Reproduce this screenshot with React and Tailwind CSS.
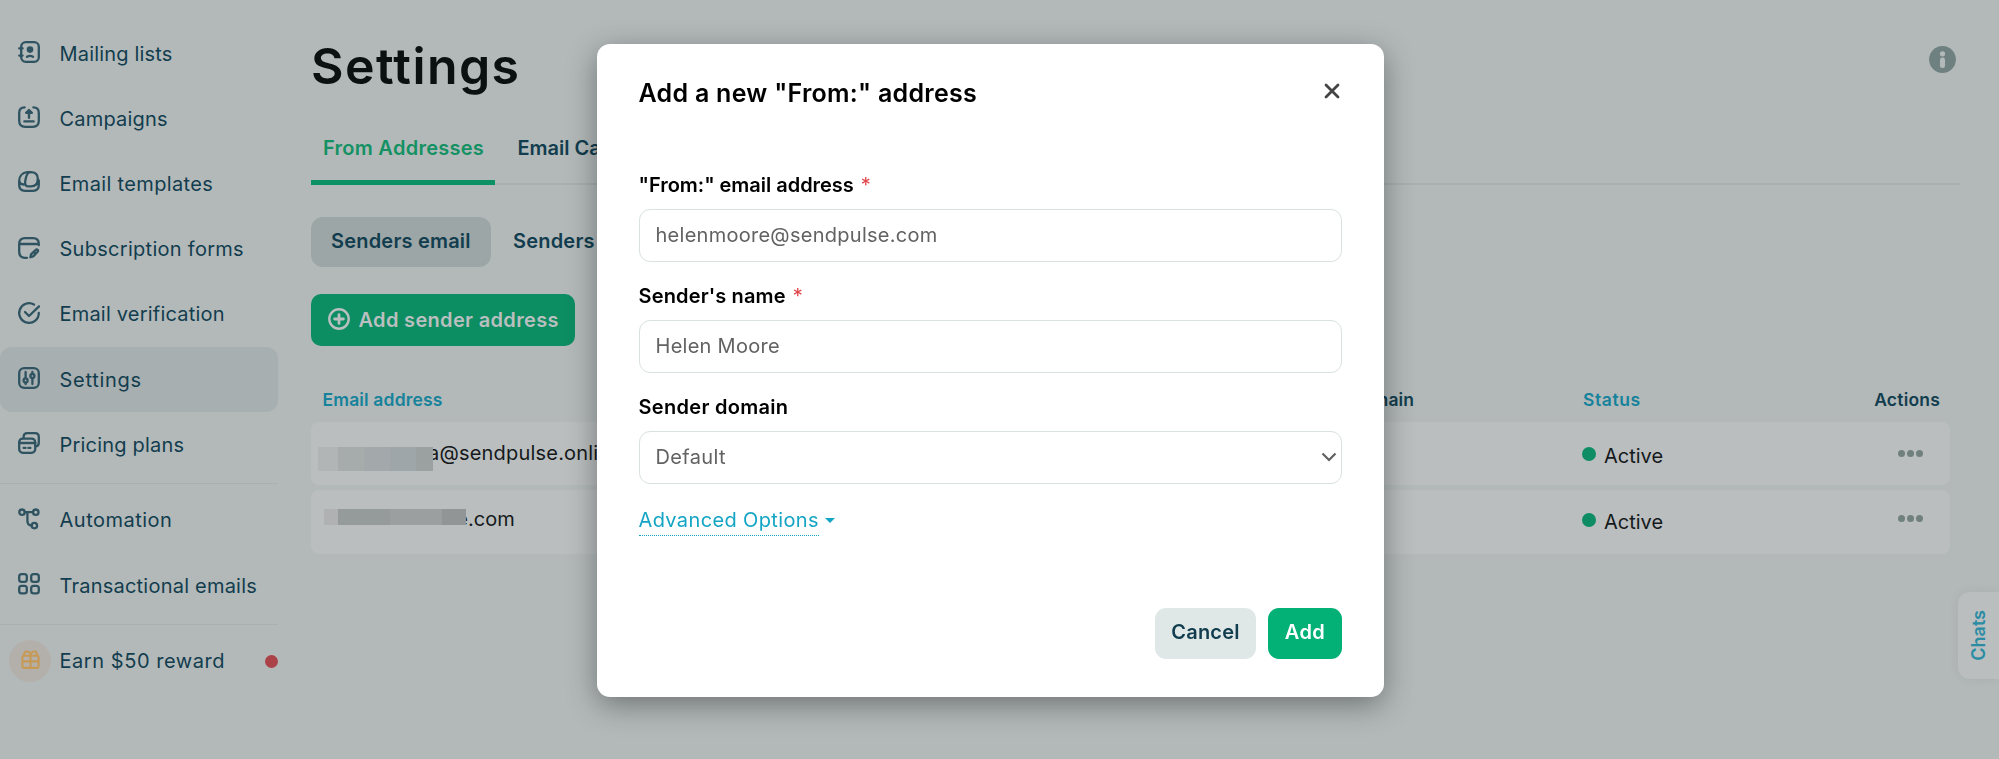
import { useState } from 'react'

const mainLinks = [
  { label: 'Mailing lists', icon: 'lists', track: 'tracking-[0.18px]' },
  { label: 'Campaigns', icon: 'campaigns', track: 'tracking-[0.2px]' },
  { label: 'Email templates', icon: 'templates', track: 'tracking-[0.34px]' },
  { label: 'Subscription forms', icon: 'forms', track: 'tracking-[0.28px]' },
  { label: 'Email verification', icon: 'verify', track: 'tracking-[0.2px]' },
  { label: 'Settings', icon: 'settings', track: 'tracking-[0.7px]', active: true },
  { label: 'Pricing plans', icon: 'pricing', track: 'tracking-[0.2px]' },
]

const extraLinks = [
  { label: 'Automation', icon: 'automation', track: 'tracking-[0.5px]' },
  { label: 'Transactional emails', icon: 'grid', track: 'tracking-[0.22px]' },
]

const icons = {
  lists: (
    <>
      <rect x="3.2" y="1.2" width="17.6" height="19.6" rx="4.6" />
      <path d="M1.2 7.4h3.4M1.2 14.6h3.4" />
      <circle cx="12" cy="8.6" r="3.3" fill="currentColor" stroke="none" />
      <path d="M9 15.8c1.6-1 4.400-1 6 0" />
    </>
  ),
  campaigns: (
    <>
      <path d="M6.6 1.4C3 1.400 1.200 3.200 1.200 7v7.8c0 4 2 6 6 6h7.600c4 0 6-2 6-6V7c0-3.800-1.800-5.600-5.400-5.600" />
      <path d="M11 11.800V5M8.200 6.800 11 4l2.800 2.800zM6.400 15.400h9.200" strokeWidth="2.400" />
    </>
  ),
  templates: (
    <>
      <path d="M12.400 1.200c5.200 0 7.400 2.600 7.400 6.600 0 4.600-2.400 7.600-6.800 7.600h-2.400c-2.800 0-3.800-2-3.400-5C7.800 6 8.600 3 11 1.400" />
      <path d="M12.400 1.200H9.200C4.400 1.800 1.200 5.200 1.200 9.800V14c0 3.800 2 5.800 5.800 5.800h8c3.800 0 5.800-2 5.800-5.800V9.400M1.400 10.400c.4 2.400 2.400 3.400 5.400 3M20.600 10.800c-.4 1.600-1.400 2.600-3 3" />
    </>
  ),
  forms: (
    <>
      <path d="M9 20.800H7c-4 0-5.800-2-5.800-6V7c0-4 2-5.800 5.800-5.800h8c4 0 5.800 1.800 5.800 5.800v1.200M1.200 7h19.600" />
      <path d="m13 17.400 4.600-4.400c1.400-1.200 3.200.4 2 1.800l-4.400 4.600-2.800.8zM16.400 15.400l1 1" />
    </>
  ),
  verify: (
    <>
      <path d="M16 2.600A9.800 9.800 0 1 0 20.800 11" />
      <path d="m7 10 4 4L21 4.400" />
    </>
  ),
  settings: (
    <>
      <rect x="1.2" y="1.2" width="19.6" height="19.6" rx="5" />
      <path d="M7.6 5v6M7.600 16v1M14.400 11.800V17M14.400 5v1" />
      <circle cx="7.6" cy="13.4" r="2" />
      <circle cx="14.4" cy="9" r="2" />
    </>
  ),
  pricing: (
    <>
      <path d="M5.600 5.600V5c0-2.600 1.200-3.800 3.800-3.800H17c2.600 0 3.800 1.200 3.800 3.800v5.600c0 2.600-1.200 3.800-3.200 3.800" />
      <rect x="1.2" y="6.6" width="16" height="14.2" rx="3.6" />
      <path d="M1.200 11h16M5.600 15.900h2M10.400 15.900h2" />
    </>
  ),
  automation: (
    <>
      <circle cx="4" cy="4.2" r="2.7" />
      <circle cx="17.8" cy="4.2" r="2.7" />
      <circle cx="16.4" cy="17.6" r="2.7" />
      <path d="M6.800 4.200H15M9.400 4.200v8.600c0 3 1.200 4.600 4.200 4.800" />
    </>
  ),
  grid: (
    <>
      <rect x="1.2" y="1.2" width="7.6" height="7.6" rx="2.4" />
      <rect x="13.2" y="1.2" width="7.6" height="7.6" rx="2.4" />
      <rect x="1.2" y="12.8" width="7.6" height="7.6" rx="2.4" />
      <rect x="13.2" y="12.8" width="7.6" height="7.6" rx="2.4" />
    </>
  ),
}

function NavIcon({ name }) {
  return (
    <svg
      viewBox="0 0 22 22"
      className="-mt-[3px] size-[22px] shrink-0 overflow-visible text-[#2f5361]"
      fill="none"
      stroke="currentColor"
      strokeWidth="2.3"
      strokeLinecap="round"
      strokeLinejoin="round"
    >
      {icons[name]}
    </svg>
  )
}

function NavLink({ link }) {
  return (
    <a
      className={`flex h-[65.2px] items-center gap-[19.5px] rounded-xl pl-[18px] text-[20px] ${
        link.active ? 'bg-[#a8afb0]' : ''
      }`}
    >
      <NavIcon name={link.icon} />
      <span className={link.track}>{link.label}</span>
    </a>
  )
}

function Sidebar() {
  return (
    <nav className="w-[278px] shrink-0 pt-[21px] text-[#123d4e]">
      {mainLinks.map((link) => (
        <NavLink key={link.label} link={link} />
      ))}
      <div className="mt-[5.5px] mb-1 h-px bg-[#a9b0b0]" />
      {extraLinks.map((link) => (
        <NavLink key={link.label} link={link} />
      ))}
      <div className="mt-[6px] mb-[15px] h-px bg-[#a9b0b0]" />
      <a className="flex h-[42px] items-center pl-[9px] text-[20px] tracking-[0.55px]">
        <span className="flex size-[42px] items-center justify-center rounded-full bg-[#b3b0ab]">
          <svg viewBox="0 0 20 20" className="-mt-1 size-[19px] text-[#c69955]" fill="none" stroke="currentColor" strokeWidth="2.2">
            <rect x="1.5" y="6" width="17" height="12.8" rx="1.5" />
            <path d="M10 6v12.5M1.500 12h17M4 6C1.500 1.500 7.500-.5 10 4.500 12.500-.5 18.500 1.500 16 6" />
          </svg>
        </span>
        <span className="ml-[8.5px]">Earn $50 reward</span>
        <span className="ml-auto size-[13px] rounded-full bg-[#ab4247]" />
      </a>
    </nav>
  )
}

function StatusCell() {
  return (
    <span className="flex items-center">
      <span className="mr-2 -mt-1 size-[14px] rounded-full bg-[#0e8d65]" />
      Active
    </span>
  )
}

function Dots() {
  return (
    <span className="ml-auto mr-[27.5px] flex gap-[2.5px]">
      <i className="size-[6.5px] rounded-full bg-[#70807f]" />
      <i className="size-[6.5px] rounded-full bg-[#70807f]" />
      <i className="size-[6.5px] rounded-full bg-[#70807f]" />
    </span>
  )
}

function AddressTable() {
  return (
    <section className="mt-[41px] w-[1639px]">
      <div className="grid h-[35px] grid-cols-[962px_298.5px_1fr] pl-[11.5px] text-[17.5px] leading-[25px] font-semibold tracking-[0.15px] text-[#123d4e]">
        <span className="text-[#16829b]">Email address</span>
        <span>Sender domain</span>
        <span className="flex justify-between pr-[10px]">
          <span className="tracking-[0.6px] text-[#16829b]">Status</span>
          <span className="tracking-[0.2px]">Actions</span>
        </span>
      </div>
      <div className="grid h-[62.5px] grid-cols-[1263px_1fr] items-center rounded-lg bg-[#babebf] pl-[7px] text-[20px] text-[#15191b]">
        <span className="flex items-center">
          <span className="relative z-10 mt-[11px] flex h-6">
            <i className="w-5 bg-[#b1b5b6]" />
            <i className="w-[26px] bg-[#a6abac]" />
            <i className="w-[26px] bg-[#a3a9ab]" />
            <i className="w-[26px] bg-[#9fa6aa]" />
            <i className="w-[17px] bg-[#9ba0a1]" />
          </span>
          <span className="-ml-[5px] tracking-[0.2px]">a@sendpulse.online</span>
        </span>
        <span className="flex items-center pl-px">
          <span className="mt-[5px]">
            <StatusCell />
          </span>
          <Dots />
        </span>
      </div>
      <div className="mt-[5.5px] grid h-[63.5px] grid-cols-[1263px_1fr] items-center rounded-lg bg-[#babebf] pl-[7px] text-[20px] text-[#15191b]">
        <span className="-mt-[5px] flex items-center pl-1.5">
          <span className="-mt-[5px] flex h-4">
            <i className="w-[14px] bg-[#afb1b2]" />
            <i className="w-[52px] bg-[#959a9a]" />
            <i className="w-[52px] bg-[#9b9f9f]" />
            <i className="w-[24px] bg-[#919595]" />
          </span>
          <span className="flex w-[2px] justify-end overflow-hidden">e</span>
          <span>.com</span>
        </span>
        <span className="flex items-center pl-px">
          <StatusCell />
          <span className="-mt-[7px] ml-auto">
            <Dots />
          </span>
        </span>
      </div>
    </section>
  )
}

function SettingsPage() {
  return (
    <main className="ml-[33px] w-[1649px] shrink-0">
      <header className="flex items-start justify-between">
        <h1 className="mt-[36px] text-[50px] leading-[60px] font-semibold tracking-[1.4px] text-[#0b1011]">Settings</h1>
        <svg viewBox="0 0 27 27" className="mt-[46px] mr-1 size-[27px]">
          <circle cx="13.5" cy="13.5" r="13.4" fill="#6f8081" />
          <circle cx="13.5" cy="7.8" r="2.6" fill="#b3b9b9" />
          <rect x="11" y="11.6" width="5" height="10.4" rx="2.3" fill="#b3b9b9" />
        </svg>
      </header>
      <div className="mt-[29px] flex h-[60px] border-b-2 border-[#a9b0b0] text-[20px] leading-[46px] font-semibold text-[#123d4e]">
        <span className="h-[60px] w-[184px] border-b-[5px] border-[#0b9163] pl-3 tracking-[0.27px] text-[#149163]">
          From Addresses
        </span>
        <span className="ml-[22.5px]">Email Campaigns</span>
      </div>
      <div className="mt-[31.5px] flex h-[50.5px] text-[20px] leading-[48px] font-semibold tracking-[0.2px] text-[#123d4e]">
        <span className="w-[180px] rounded-xl bg-[#9ca6a7] pl-5">Senders email</span>
        <span className="ml-[22px]">Senders name</span>
      </div>
      <button className="mt-[27px] flex h-[52px] w-[264px] items-center rounded-[10px] bg-[#0d8d62] pl-[16.5px] text-[20px] font-semibold tracking-[0.33px] text-[#babfbf]">
        <svg viewBox="0 0 22 22" className="-mt-[3px] mr-[9px] size-[22px]" fill="none" stroke="currentColor" strokeWidth="2.4" strokeLinecap="round">
          <circle cx="11" cy="11" r="9.7" />
          <path d="M11 6.600v8.800M6.600 11h8.800" strokeWidth="2.8" />
        </svg>
        Add sender address
      </button>
      <AddressTable />
    </main>
  )
}

function Field({ label, track, required, children }) {
  return (
    <div className="h-[111px]">
      <div className="flex h-[33.5px] text-[20px] leading-[19px] font-semibold text-black">
        <span className={track}>{label}</span>
        {required && <span className="ml-[7px] text-[#e0454b] font-normal">*</span>}
      </div>
      {children}
    </div>
  )
}

function AddressModal() {
  const [email, setEmail] = useState('helenmoore@sendpulse.com')
  const [name, setName] = useState('Helen Moore')
  const inputClass =
    'block h-[52.5px] w-full rounded-[11px] border border-[#dae1e1] bg-white pl-4 text-[20px] tracking-[0.27px] text-[#626262] outline-none'

  return (
    <div className="fixed inset-0 flex items-start pt-[43.5px] pl-[596.5px]">
      <div className="h-[653.5px] w-[787.5px] rounded-[13px] bg-white px-[42px] shadow-[0_8px_30px_0_rgba(0,0,0,0.38)]">
        <div className="flex h-[132px] items-start justify-between">
          <h2 className="mt-[33px] text-[25px] leading-[32px] font-semibold tracking-[0.27px] text-black">
            Add a new "From:" address
          </h2>
          <svg viewBox="0 0 16 16" className="mt-[39px] mr-[2.5px] size-4" fill="none" stroke="#444" strokeWidth="2.8" strokeLinecap="round">
            <path d="m2 2 12 12M14 2 2 14" />
          </svg>
        </div>
        <Field label={'"From:" email address'} track="tracking-[-0.03px]" required>
          <input className={inputClass} value={email} onChange={(event) => setEmail(event.target.value)} />
        </Field>
        <Field label="Sender's name" track="tracking-[0.15px]" required>
          <input className={inputClass} value={name} onChange={(event) => setName(event.target.value)} />
        </Field>
        <Field label="Sender domain" track="tracking-[0.3px]">
          <div className="flex h-[52.5px] items-center justify-between rounded-[11px] border border-[#dae1e1] pr-[4.5px] pl-4 text-[20px] tracking-[0.35px] text-[#626262]">
            Default
            <svg viewBox="0 0 16 10" className="h-[10px] w-4" fill="none" stroke="#606060" strokeWidth="2.2">
              <path d="m1.500 1.500 6.500 6.500 6.500-6.500" />
            </svg>
          </div>
        </Field>
        <div className="flex h-[99.5px] items-start">
          <a className="h-[27.5px] border-b border-dotted border-[#15a5c4] text-[20px] leading-[22px] tracking-[0.36px] text-[#15a5c4]">
            Advanced Options
          </a>
          <svg viewBox="0 0 10 5" className="mt-[9.5px] ml-1.5 h-[5px] w-[10px]">
            <path d="M0 0h10L5 5z" fill="#15a5c4" />
          </svg>
        </div>
        <div className="flex justify-end gap-3 text-[20px] font-semibold">
          <button className="h-[51px] w-[101px] rounded-[11px] bg-[#e0e8e7] pb-[3px] tracking-[0.2px] text-[#123d4e]">Cancel</button>
          <button className="h-[51px] w-[74px] rounded-[11px] bg-[#03b176] pb-[3px] tracking-[0.4px] text-white">Add</button>
        </div>
      </div>
    </div>
  )
}

export default function App() {
  return (
    <div className="relative flex h-[759px] w-[1999px] overflow-hidden bg-[#b3b9b9] font-['Inter',sans-serif]">
      <Sidebar />
      <SettingsPage />
      <div className="absolute top-[592px] right-0 flex h-[87px] w-[41px] items-center justify-center rounded-l-xl bg-[#babebf] text-[18px] font-semibold text-[#2b8ca3] shadow-[0_0_12px_rgba(0,0,0,0.06)]">
        <span className="rotate-180 [writing-mode:vertical-rl]">Chats</span>
      </div>
      <AddressModal />
    </div>
  )
}
